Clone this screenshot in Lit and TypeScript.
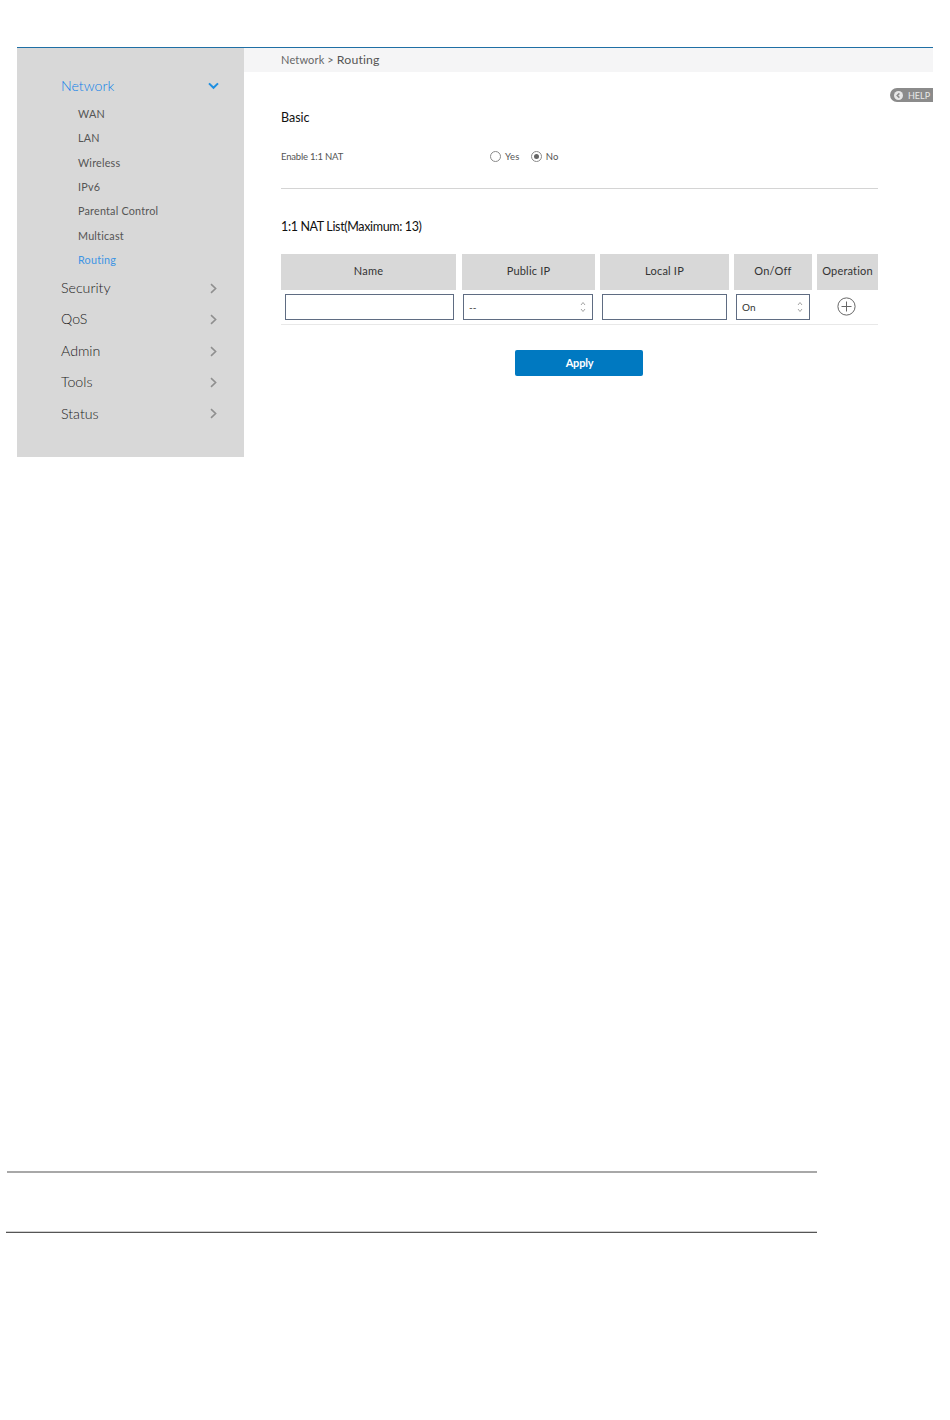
import { LitElement, html, css, svg } from "lit";
import { customElement } from "lit/decorators.js";

const chevRight = svg`<svg class="chev right" width="9" height="11" viewBox="0 0 9 11"><path d="M2 1.2 L6.6 5.5 L2 9.8" fill="none" stroke="#8f8f8f" stroke-width="1.6"/></svg>`;
const chevDown = svg`<svg class="chev" width="11" height="8" viewBox="0 0 11 8"><path d="M1 1.4 L5.5 5.8 L10 1.4" fill="none" stroke="#1e8fe1" stroke-width="2"/></svg>`;
const updown = svg`<svg width="6" height="12" viewBox="0 0 6 12"><path d="M1 4 L3 1.5 L5 4 M1 8 L3 10.5 L5 8" fill="none" stroke="#9a9a9a" stroke-width="0.9"/></svg>`;

@customElement("app-root")
export class AppRoot extends LitElement {
  static styles = css`
    :host { display: block; width: 950px; height: 1420px; position: relative; background: #fff; font-family: Lato, "Noto Sans", sans-serif; color: #444; overflow: hidden; }
    .frame { margin: 47px 17px 0 17px; width: 916px; border-top: 1px solid #1f6fa5; display: flex; height: 409px; }
    .side { width: 227px; background: #d8d8d8; padding: 22.5px 25px 0 44px; box-sizing: border-box; flex: none; }
    .top { display: flex; align-items: center; justify-content: space-between; height: 31.4px; font-size: 14.2px; font-weight: 300; color: #222; }
    .top span { margin-bottom: 1.5px; }
    .top.active { color: #0a7ee8; }
    .top .chev { flex: none; }
    .top .chev.right { margin-right: 1px; }
    .subs { margin: 0; padding: 0 0 0 17px; list-style: none; }
    .subs li { height: 24.4px; line-height: 24.4px; font-size: 10.8px; color: #555; white-space: nowrap; letter-spacing: 0.2px; }
    .subs li.active { color: #3d95e4; }
    .main { flex: 1; min-width: 0; position: relative; }
    .crumb { height: 24px; line-height: 24px; background: #f5f5f6; padding-left: 37px; font-size: 11px; color: #666; letter-spacing: 0.15px; }
    .crumb b { font-weight: 400; font-size: 12.3px; color: #555; }
    .content { width: 597px; margin-left: 37px; }
    .basic { margin: 38px 0 0; font-size: 12.5px; font-weight: 400; color: #111; line-height: 16px; height: 16px; }
    .field { display: flex; align-items: center; height: 14px; margin-top: 23px; font-size: 9.5px; color: #555; letter-spacing: 0.2px; }
    .label { width: 209px; letter-spacing: -0.2px; }
    .radio { display: flex; align-items: center; margin-right: 11px; gap: 4px; }
    .dot { width: 9px; height: 9px; border: 1px solid #8a8a8a; border-radius: 50%; display: flex; align-items: center; justify-content: center; background: #fff; }
    .dot i { width: 5px; height: 5px; border-radius: 50%; background: #666; }
    hr { border: 0; border-top: 1px solid #d4d4d4; margin: 25px 0 0; }
    h3 { margin: 30px 0 0; font-size: 12.5px; font-weight: 400; color: #111; line-height: 16px; letter-spacing: -0.35px; }
    .grid { display: grid; grid-template-columns: 176px 133px 129px 78px 61px; column-gap: 5px; margin-top: 19px; }
    .th { height: 36px; padding-bottom: 3px; box-sizing: border-box; background: #d8d8d8; display: flex; align-items: center; justify-content: center; font-size: 11px; color: #333; white-space: nowrap; letter-spacing: 0.2px; }
    .th.first { margin-right: 1px; }
    .row { display: grid; grid-template-columns: 176px 133px 129px 78px 61px; column-gap: 5px; height: 30px; padding-top: 4px; box-sizing: content-box; border-bottom: 1px solid #e8e8e8; }
    .box { box-sizing: border-box; height: 26px; border: 1px solid #5f6c82; background: #fff; display: flex; align-items: center; justify-content: space-between; font-size: 10px; color: #333; padding: 0 6px 1px 5px; }
    .box svg { margin-top: 1px; }
    .b-name { margin: 0 3px 0 4px; }
    .b-pub { margin: 0 2px 0 1px; }
    .b-loc { margin: 0 2px 0 2px; }
    .b-on { margin: 0 2px 0 2px; }
    .plus { display: flex; align-items: flex-start; justify-content: center; padding-top: 3px; padding-right: 3px; }
    .actions { display: flex; justify-content: center; margin-top: 25px; padding-right: 2px; }
    .apply { width: 128px; height: 26px; background: #0079c1; color: #fff; border: 0; border-radius: 2px; font: 700 11px Lato, sans-serif; letter-spacing: -0.2px; padding: 0 0 2px 2px; }
    .help { position: absolute; right: 0; top: 40px; width: 43px; height: 14px; box-sizing: border-box; background: #8b8b8b; border-radius: 7px 0 0 7px; color: #e8e8e8; font-size: 9px; display: flex; align-items: center; padding-left: 4px; gap: 5px; }
    .r1 { height: 2px; margin: 714px 0 0 7px; width: 810px; background: #a8a8a8; }
    .r2 { height: 1px; border-top: 1px solid #d0d0d0; margin: 58px 0 0 6px; width: 811px; background: #555; }
  `;

  render() {
    const sub = ["WAN", "LAN", "Wireless", "IPv6", "Parental Control", "Multicast", "Routing"];
    const tops = ["Security", "QoS", "Admin", "Tools", "Status"];
    return html`
      <div class="frame">
        <nav class="side">
          <div class="top active"><span>Network</span>${chevDown}</div>
          <ul class="subs">
            ${sub.map((s) => html`<li class=${s === "Routing" ? "active" : ""}>${s}</li>`)}
          </ul>
          ${tops.map((t) => html`<div class="top"><span>${t}</span>${chevRight}</div>`)}
        </nav>
        <section class="main">
          <div class="crumb">Network &gt; <b>Routing</b></div>
          <div class="help">
            <svg width="9" height="9" viewBox="0 0 9 9"><circle cx="4.5" cy="4.5" r="4.5" fill="#e8e8e8"/><path d="M5.4 2.4 L3.2 4.5 L5.4 6.6" fill="none" stroke="#8b8b8b" stroke-width="1.5"/></svg>
            <span>HELP</span>
          </div>
          <div class="content">
            <h2 class="basic">Basic</h2>
            <div class="field">
              <span class="label">Enable 1:1 NAT</span>
              <span class="radio"><span class="dot"></span>Yes</span>
              <span class="radio"><span class="dot"><i></i></span>No</span>
            </div>
            <hr />
            <h3>1:1 NAT List(Maximum: 13)</h3>
            <div class="grid">
              <div class="th first">Name</div>
              <div class="th">Public IP</div>
              <div class="th">Local IP</div>
              <div class="th">On/Off</div>
              <div class="th">Operation</div>
            </div>
            <div class="row">
              <div class="box b-name"></div>
              <div class="box b-pub"><span>--</span>${updown}</div>
              <div class="box b-loc"></div>
              <div class="box b-on"><span>On</span>${updown}</div>
              <div class="plus">
                <svg width="19" height="19" viewBox="0 0 19 19"><circle cx="9.5" cy="9.5" r="8.6" fill="none" stroke="#666" stroke-width="1"/><path d="M9.5 4.5 V14.5 M4.5 9.5 H14.5" stroke="#666" stroke-width="1"/></svg>
              </div>
            </div>
            <div class="actions"><button class="apply">Apply</button></div>
          </div>
        </section>
      </div>
      <div class="r1"></div>
      <div class="r2"></div>
    `;
  }
}
